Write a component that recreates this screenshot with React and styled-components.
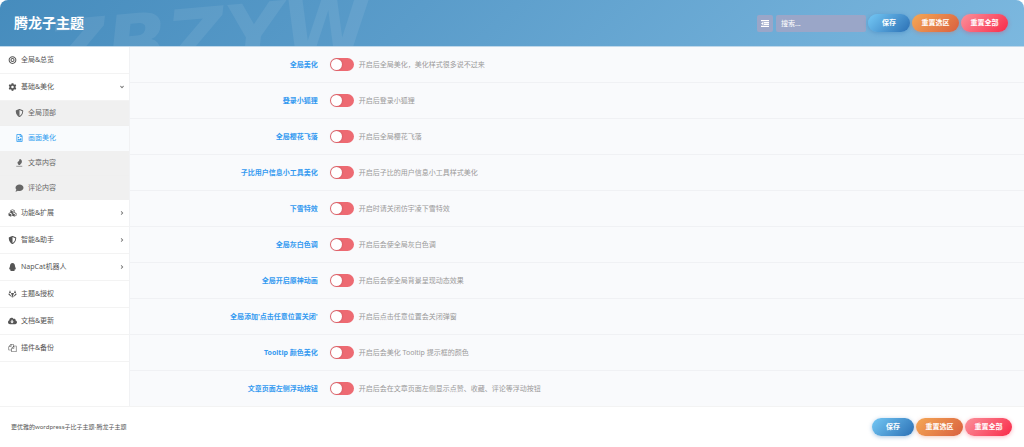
import { useState } from 'react'
import styled, { createGlobalStyle, css } from 'styled-components'
import {
  FaBullseye,
  FaCog,
  FaShieldAlt,
  FaRegFileImage,
  FaComment,
  FaCubes,
  FaQq,
  FaGitlab,
  FaCloudDownloadAlt,
  FaAngleDown,
  FaAngleRight,
} from 'react-icons/fa'

const GlobalStyle = createGlobalStyle`
  * {
    box-sizing: border-box;
  }

  body {
    margin: 0;
    background: #fff;
    color: #555;
    font-family: 'Noto Sans', 'Noto Sans CJK SC', sans-serif;
    font-size: 7px;
    line-height: 12px;
  }

  button,
  input {
    font: inherit;
  }
`

const Page = styled.div`
  min-height: 100vh;
  display: flex;
  flex-direction: column;
`

const Header = styled.header`
  position: relative;
  overflow: hidden;
  height: 47px;
  padding: 0 16px 0 14px;
  display: flex;
  align-items: center;
  justify-content: space-between;
  border-bottom: 1px solid #c0d8ea;
  border-radius: 8px 8px 0 0;
  background: linear-gradient(135deg, #468cbd 0%, #5a9cca 40%, #7cb8df 100%);
`

const Watermark = styled.span`
  position: absolute;
  left: 48px;
  top: -2px;
  font: italic bold 80px/80px 'DejaVu Sans', sans-serif;
  color: rgba(255, 255, 255, 0.08);
  transform: rotate(-5deg);
  pointer-events: none;
`

const Title = styled.h1`
  position: relative;
  margin: 0;
  font-size: 14px;
  line-height: 20px;
  font-weight: 700;
  color: #fff;
`

const Actions = styled.div`
  position: relative;
  display: flex;
  align-items: center;
  gap: 2px;
`

const ExpandButton = styled.button`
  width: 16px;
  height: 17px;
  margin-right: 1px;
  padding: 0;
  display: flex;
  align-items: center;
  justify-content: center;
  border: 0;
  border-radius: 2px;
  background: #9aa6c8;
  color: #fff;
  cursor: pointer;
`

const Search = styled.input`
  width: 90px;
  height: 17px;
  padding: 0 5px;
  border: 0;
  border-radius: 2px;
  outline: 0;
  background: #9aa6c8;
  color: #fff;

  &::placeholder {
    color: #fff;
    opacity: 1;
  }
`

const tones = {
  blue: css`
    width: 42px;
    background: linear-gradient(135deg, #74c8f5, #2b70b5);
    box-shadow: 0 1px 4px rgba(43, 112, 181, 0.4);
  `,
  orange: css`
    width: 47px;
    background: linear-gradient(135deg, #f5a855, #d9603f);
    box-shadow: 0 1px 4px rgba(217, 96, 63, 0.35);
  `,
  red: css`
    width: 47px;
    background: linear-gradient(135deg, #fb919b, #f92a49);
    box-shadow: 0 1px 4px rgba(249, 42, 73, 0.35);
  `,
}

const PillButton = styled.button`
  height: 18px;
  padding: 0;
  border: 0;
  border-radius: 9px;
  color: #fff;
  font-weight: 600;
  cursor: pointer;
  ${(props) => tones[props.$tone]}
`

const Body = styled.div`
  flex: 1;
  display: flex;
`

const Sidebar = styled.nav`
  flex: 0 0 130px;
  border-right: 1px solid #f1f2f4;
  background: #fff;
`

const Menu = styled.ul`
  margin: 0;
  padding: 0;
  list-style: none;
`

const MenuLink = styled.a`
  height: 27px;
  padding: 0 4px 0 8px;
  display: flex;
  align-items: center;
  gap: 4px;
  border-bottom: 1px solid #f3f3f3;
  color: #555;
  text-decoration: none;

  > svg:first-child {
    flex: 0 0 9px;
    height: 8px;
  }
`

const SubLink = styled(MenuLink)`
  height: 25px;
  padding-left: 15px;
  border-bottom-color: ${(props) => (props.$active ? '#f9fbfd' : '#efefef')};
  background: ${(props) => (props.$active ? '#f9fbfd' : '#f0f0f0')};
  color: ${(props) => (props.$active ? '#2d9bf0' : '#666')};

  li:last-child > & {
    height: 24px;
    border-bottom: 0;
  }
`

const Arrow = styled.span`
  margin-left: auto;
  display: flex;
  color: #777;
`

const Content = styled.main`
  flex: 1;
  background: #f9fafc;
`

const Field = styled.div`
  height: 36px;
  display: flex;
  align-items: center;
  border-bottom: 1px solid #f0f1f4;

  &:last-child {
    height: 35px;
    border-bottom: 0;
  }
`

const FieldTitle = styled.label`
  width: 21%;
  margin-right: 12px;
  text-align: right;
  font-weight: 700;
  color: #3399f0;
`

const Switch = styled.input`
  appearance: none;
  width: 24px;
  height: 13px;
  margin: 0 5px 0 0;
  padding: 1px;
  display: flex;
  border-radius: 7px;
  background: ${(props) => (props.checked ? '#4fbe6b' : '#ed6a72')};
  cursor: pointer;

  &::before {
    content: '';
    width: 11px;
    height: 11px;
    margin-left: ${(props) => (props.checked ? 'auto' : '0')};
    border-radius: 50%;
    background: #fff;
    box-shadow: 0 0 2px rgba(0, 0, 0, 0.25);
  }
`

const Description = styled.span`
  color: #999;
`

const Footer = styled.footer`
  height: 41px;
  padding: 0 12px 0 11px;
  display: flex;
  align-items: center;
  justify-content: space-between;
  border-top: 1px solid #f3f3f3;
  background: #fff;
`

const Copyright = styled.span`
  font-size: 6px;
`

function OutdentIcon() {
  return (
    <svg width="8" height="7" viewBox="0 0 8 7" fill="currentColor" aria-hidden="true">
      <path d="M0 0h8v1.300H0zM3 1.900h5v1.300H3zM3 3.800h5v1.300H3zM0 5.700h8V7H0zM0 3.500l2.400-1.800v3.600z" />
    </svg>
  )
}

function FilesIcon() {
  return (
    <svg width="8" height="8" viewBox="0 0 1792 1792" fill="currentColor" aria-hidden="true">
      <path d="M1696 384q40 0 68 28t28 68v1216q0 40-28 68t-68 28h-960q-40 0-68-28t-28-68v-288h-544q-40 0-68-28t-28-68v-672q0-40 20-88t48-76l408-408q28-28 76-48t88-20h416q40 0 68 28t28 68v328q68-40 128-40h416zm-544 213l-299 299h299v-299zm-640-384l-299 299h299v-299zm196 647l316-316v-416h-384v416q0 40-28 68t-68 28h-416v640h512v-256q0-40 20-88t48-76zm956 804v-1152h-384v416q0 40-28 68t-68 28h-416v640h896z" />
    </svg>
  )
}

function FlameIcon() {
  return (
    <svg width="8" height="8" viewBox="0 0 16 16" fill="currentColor" aria-hidden="true">
      <path d="M8.500 0c3 .5 4.500 3 4.300 5.500-.2 3-2.300 3.500-3.800 6.500H6C6 10 3.500 9.500 4 7c.4-1.800 2.500-2 3.200-3.500C7.800 2.300 7.500 1 8.500 0z" />
      <path d="M1.500 13.500h12V16h-12z" opacity=".5" />
    </svg>
  )
}

const menu = [
  { text: '全局&总览', icon: FaBullseye },
  {
    text: '基础&美化',
    icon: FaCog,
    arrow: FaAngleDown,
    items: [
      { text: '全局顶部', icon: FaShieldAlt },
      { text: '画面美化', icon: FaRegFileImage, active: true },
      { text: '文章内容', icon: FlameIcon },
      { text: '评论内容', icon: FaComment },
    ],
  },
  { text: '功能&扩展', icon: FaCubes, arrow: FaAngleRight },
  { text: '智能&助手', icon: FaShieldAlt, arrow: FaAngleRight },
  { text: 'NapCat机器人', icon: FaQq, arrow: FaAngleRight },
  { text: '主题&授权', icon: FaGitlab },
  { text: '文档&更新', icon: FaCloudDownloadAlt },
  { text: '插件&备份', icon: FilesIcon },
]

const fields = [
  ['全局美化', '开启后全局美化，美化样式很多说不过来'],
  ['登录小狐狸', '开启后登录小狐狸'],
  ['全局樱花飞落', '开启后全局樱花飞落'],
  ['子比用户信息小工具美化', '开启后子比的用户信息小工具样式美化'],
  ['下雪特效', '开启时请关闭仿宇凌下雪特效'],
  ['全局灰白色调', '开启后会使全局灰白色调'],
  ['全局开启原神动画', '开启后会使全局背景呈现动态效果'],
  ["全局添加'点击任意位置关闭'", '开启后点击任意位置会关闭弹窗'],
  ['Tooltip 颜色美化', '开启后会美化 Tooltip 提示框的颜色'],
  ['文章页面左侧浮动按钮', '开启后会在文章页面左侧显示点赞、收藏、评论等浮动按钮'],
]

function SaveButtons() {
  return (
    <>
      <PillButton type="button" $tone="blue">保存</PillButton>
      <PillButton type="button" $tone="orange">重置选区</PillButton>
      <PillButton type="button" $tone="red">重置全部</PillButton>
    </>
  )
}

function MenuItem({ item }) {
  const Icon = item.icon
  const ArrowIcon = item.arrow
  return (
    <li>
      <MenuLink href="#">
        <Icon />
        {item.text}
        {ArrowIcon && (
          <Arrow>
            <ArrowIcon size={6} />
          </Arrow>
        )}
      </MenuLink>
      {item.items && (
        <Menu>
          {item.items.map((sub) => (
            <li key={sub.text}>
              <SubLink href="#" $active={sub.active}>
                <sub.icon />
                {sub.text}
              </SubLink>
            </li>
          ))}
        </Menu>
      )}
    </li>
  )
}

function SwitchField({ id, title, desc }) {
  const [on, setOn] = useState(false)
  return (
    <Field>
      <FieldTitle htmlFor={id}>{title}</FieldTitle>
      <Switch id={id} type="checkbox" checked={on} onChange={() => setOn(!on)} />
      <Description>{desc}</Description>
    </Field>
  )
}

export default function App() {
  return (
    <Page>
      <GlobalStyle />
      <Header>
        <Watermark aria-hidden="true">ZBZYW</Watermark>
        <Title>腾龙子主题</Title>
        <Actions>
          <ExpandButton type="button" aria-label="展开全部">
            <OutdentIcon />
          </ExpandButton>
          <Search type="text" placeholder="搜索..." aria-label="搜索" />
          <SaveButtons />
        </Actions>
      </Header>
      <Body>
        <Sidebar>
          <Menu>
            {menu.map((item) => (
              <MenuItem key={item.text} item={item} />
            ))}
          </Menu>
        </Sidebar>
        <Content>
          {fields.map(([title, desc], i) => (
            <SwitchField key={title} id={`switch-${i}`} title={title} desc={desc} />
          ))}
        </Content>
      </Body>
      <Footer>
        <Copyright>更优雅的wordpress子比子主题-腾龙子主题</Copyright>
        <Actions>
          <SaveButtons />
        </Actions>
      </Footer>
    </Page>
  )
}
